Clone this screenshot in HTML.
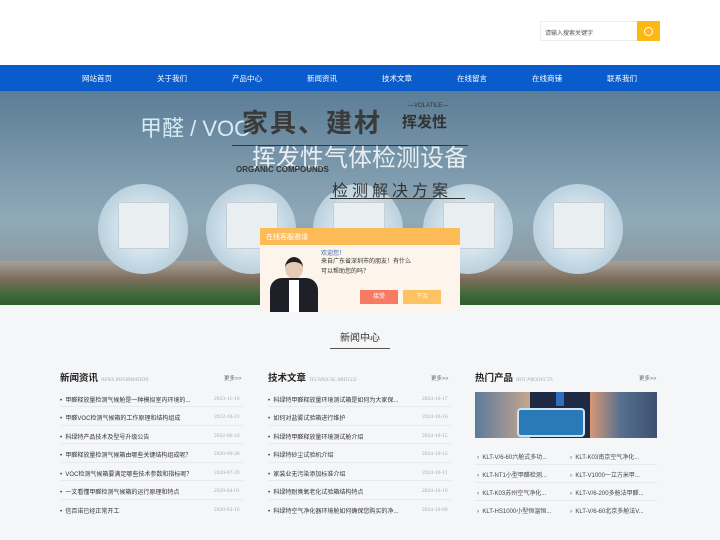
<!DOCTYPE html>
<html><head><meta charset="utf-8"><style>
*{margin:0;padding:0;box-sizing:border-box}
body{width:720px;height:540px;overflow:hidden;background:#f5f6f8;font-family:"Liberation Sans","Noto Sans CJK SC",sans-serif;position:relative}
.abs{position:absolute}
.top{left:0;top:0;width:720px;height:65px;background:#fff}
.nav{left:0;top:65px;width:720px;height:26px;background:#0a5ccc;}
.nav span{position:absolute;top:8px;font-size:7.5px;color:#fff;transform:translateX(-50%)}
.banner{left:0;top:91px;width:720px;height:214px;background:linear-gradient(180deg,#5b7d96 0%,#7b98ab 35%,#8fa9b8 60%,#8d9aa0 80%,#5d6a52 100%);overflow:hidden}
.circ{position:absolute;width:90px;height:90px;border-radius:50%;background:radial-gradient(circle,#d9e8f0 30%,#b3cbd9 80%,#a4bccb 100%);}
.circ:after{content:"";position:absolute;left:20px;top:18px;width:50px;height:45px;background:#e9eef1;border:1px solid #c5ced4}
.row{position:absolute;font-size:6px;color:#333;}
.date{position:absolute;font-size:5.5px;color:#aaa;font-family:"Liberation Serif",serif}
.line{position:absolute;height:1px;background:#e8e9ec}
.h{position:absolute;font-size:9.5px;font-weight:bold;color:#222}
.h i{font-family:"Liberation Serif",serif;font-size:5px;color:#aaa;font-weight:normal;margin-left:3px}
.more{position:absolute;font-size:5.5px;color:#666}
</style></head><body>
<div class="abs top"></div>
<div class="abs" style="left:540px;top:21px;width:98px;height:20px;border:1px solid #eee;background:#fff;font-size:6px;color:#555;padding:6px 0 0 4px">请输入搜索关键字</div>
<div class="abs" style="left:637px;top:21px;width:23px;height:20px;background:#fdb813"><div class="abs" style="left:7px;top:6px;width:9px;height:9px;border:1.2px solid #fff;border-radius:50%"></div></div>
<div class="abs nav">
<span style="left:97px">网站首页</span><span style="left:172px">关于我们</span><span style="left:247px">产品中心</span><span style="left:322px">新闻资讯</span><span style="left:397px">技术文章</span><span style="left:472px">在线留言</span><span style="left:547px">在线商铺</span><span style="left:622px">联系我们</span>
</div>
<div class="abs banner">
<div class="abs" style="left:0;top:170px;width:720px;height:45px;background:linear-gradient(180deg,#a8a19a,#7d6d5a 40%,#3e6a3a 75%,#2e5a2e)"></div>
<div class="circ" style="left:98px;top:93px"></div>
<div class="circ" style="left:206px;top:93px"></div>
<div class="circ" style="left:313px;top:93px"></div>
<div class="circ" style="left:423px;top:93px"></div>
<div class="circ" style="left:533px;top:93px"></div>
<div class="abs" style="left:140px;top:20px;font-size:22px;color:#d8ecf5">甲醛 / VOC</div>
<div class="abs" style="left:242px;top:12px;font-size:26px;font-weight:bold;color:#3a3a3a;letter-spacing:2px">家具、建材</div>
<div class="abs" style="left:402px;top:20px;font-size:15px;font-weight:bold;color:#333">挥发性</div>
<div class="abs" style="left:408px;top:12px;font-size:6px;color:#333">—VOLATILE—</div>
<div class="abs" style="left:232px;top:54px;width:236px;height:1px;background:#333"></div>
<div class="abs" style="left:252px;top:47px;font-size:24px;color:#e6eef2">挥发性气体检测设备</div>
<div class="abs" style="left:236px;top:74px;font-size:8px;color:#333;font-weight:bold">ORGANIC COMPOUNDS</div>
<div class="abs" style="left:332px;top:86px;font-size:16px;color:#333;letter-spacing:4px">检测解决方案</div>
<div class="abs" style="left:330px;top:107px;width:135px;height:1px;background:#333"></div>
</div>
<div class="abs" style="left:260px;top:228px;width:200px;height:84px;background:#fdf4ec"></div>
<div class="abs" style="left:260px;top:228px;width:200px;height:17px;background:#fdbb58;color:#fff;font-size:7px;padding:4px 0 0 6px">在线客服邀请</div>
<div class="abs" style="left:285px;top:257px;width:18px;height:22px;border-radius:50%;background:#e8c9b6;border-top:5px solid #222"></div>
<div class="abs" style="left:270px;top:278px;width:48px;height:34px;background:#1f1f28;border-radius:12px 12px 0 0"></div>
<div class="abs" style="left:289px;top:280px;width:10px;height:32px;background:#fff"></div>
<div class="abs" style="left:321px;top:248px;font-size:6px;color:#3c68b0">欢迎您！</div>
<div class="abs" style="left:321px;top:257px;width:90px;font-size:6px;line-height:10px;color:#333">来自广东省深圳市的朋友！有什么可以帮助您的吗？</div>
<div class="abs" style="left:360px;top:290px;width:38px;height:14px;background:#f77a63;color:#fff;font-size:6px;text-align:center;line-height:14px">接受</div>
<div class="abs" style="left:403px;top:290px;width:38px;height:14px;background:#fdc262;color:#fff;font-size:6px;text-align:center;line-height:14px">下次</div>
<div class="abs" style="left:0;top:329px;width:720px;text-align:center;font-size:10px;color:#333">新闻中心</div>
<div class="abs" style="left:0;top:337px;width:720px;text-align:center;font-size:5px;color:#aaa;font-family:'Liberation Serif',serif">NEWS CENTER</div>
<div class="abs" style="left:330px;top:348px;width:60px;height:1px;background:#555"></div>

<div class="h" style="left:60px;top:370px">新闻资讯<i>NEWS INFORMATION</i></div><div class="more" style="left:224px;top:374px">更多>></div>
<div class="h" style="left:268px;top:370px">技术文章<i>TECHNICAL ARTICLE</i></div><div class="more" style="left:431px;top:374px">更多>></div>
<div class="h" style="left:475px;top:370px">热门产品<i>HOT PRODUCTS</i></div><div class="more" style="left:639px;top:374px">更多>></div>

<div class="row" style="left:60px;top:395px">•&nbsp; 甲醛释放量检测气候舱是一种模拟室内环境的...</div><div class="date" style="left:214px;top:396px">2023-11-10</div>
<div class="row" style="left:60px;top:413px">•&nbsp; 甲醛VOC检测气候箱的工作原理和结构组成</div><div class="date" style="left:214px;top:414px">2022-10-21</div>
<div class="row" style="left:60px;top:432px">•&nbsp; 科绿特产品技术及型号升级公告</div><div class="date" style="left:214px;top:433px">2022-06-24</div>
<div class="row" style="left:60px;top:450px">•&nbsp; 甲醛释放量检测气候箱由哪些关键结构组成呢？</div><div class="date" style="left:214px;top:451px">2020-09-28</div>
<div class="row" style="left:60px;top:469px">•&nbsp; VOC检测气候箱要满足哪些技术参数和指标呢？</div><div class="date" style="left:214px;top:470px">2020-07-29</div>
<div class="row" style="left:60px;top:487px">•&nbsp; 一文看懂甲醛检测气候箱的运行原理和特点</div><div class="date" style="left:214px;top:488px">2020-04-01</div>
<div class="row" style="left:60px;top:506px">•&nbsp; 信百诺已经正常开工</div><div class="date" style="left:214px;top:507px">2020-03-16</div>

<div class="row" style="left:268px;top:395px">•&nbsp; 科绿特甲醛释放量环境测试箱是如何为大家保...</div><div class="date" style="left:422px;top:396px">2024-10-17</div>
<div class="row" style="left:268px;top:413px">•&nbsp; 如何对盐雾试验箱进行维护</div><div class="date" style="left:422px;top:414px">2024-10-16</div>
<div class="row" style="left:268px;top:432px">•&nbsp; 科绿特甲醛释放量环境测试舱介绍</div><div class="date" style="left:422px;top:433px">2024-10-15</div>
<div class="row" style="left:268px;top:450px">•&nbsp; 科绿特砂尘试验机介绍</div><div class="date" style="left:422px;top:451px">2024-10-12</div>
<div class="row" style="left:268px;top:469px">•&nbsp; 家装业无污染添加标准介绍</div><div class="date" style="left:422px;top:470px">2024-10-11</div>
<div class="row" style="left:268px;top:487px">•&nbsp; 科绿特耐臭氧老化试验箱结构特点</div><div class="date" style="left:422px;top:488px">2024-10-10</div>
<div class="row" style="left:268px;top:506px">•&nbsp; 科绿特空气净化器环境舱如何确保您购买的净...</div><div class="date" style="left:422px;top:507px">2024-10-09</div>

<div class="line" style="left:60px;top:406px;width:183px"></div><div class="line" style="left:60px;top:425px;width:183px"></div><div class="line" style="left:60px;top:443px;width:183px"></div><div class="line" style="left:60px;top:462px;width:183px"></div><div class="line" style="left:60px;top:480px;width:183px"></div><div class="line" style="left:60px;top:499px;width:183px"></div>
<div class="line" style="left:268px;top:406px;width:183px"></div><div class="line" style="left:268px;top:425px;width:183px"></div><div class="line" style="left:268px;top:443px;width:183px"></div><div class="line" style="left:268px;top:462px;width:183px"></div><div class="line" style="left:268px;top:480px;width:183px"></div><div class="line" style="left:268px;top:499px;width:183px"></div>

<div class="abs" style="left:475px;top:392px;width:182px;height:46px;background:linear-gradient(90deg,#5d7a9a,#e7b58a 40%,#f0a070 60%,#56708f 80%,#3d5070)"></div>
<div class="abs" style="left:530px;top:392px;width:60px;height:46px;background:#1e2a44"></div>
<div class="abs" style="left:517px;top:408px;width:68px;height:29px;background:#2b7ab8;border:2px solid #cfe3f2;border-radius:4px"></div>
<div class="abs" style="left:556px;top:392px;width:8px;height:14px;background:#2f6fc0"></div>

<div class="row" style="left:477px;top:452px;color:#444">›&nbsp; KLT-V/6-60六舱式多功...</div><div class="row" style="left:570px;top:452px;color:#444">›&nbsp; KLT-K03南京空气净化...</div>
<div class="row" style="left:477px;top:470px;color:#444">›&nbsp; KLT-NT1小型甲醛检测...</div><div class="row" style="left:570px;top:470px;color:#444">›&nbsp; KLT-V1000一立方米甲...</div>
<div class="row" style="left:477px;top:488px;color:#444">›&nbsp; KLT-K03苏州空气净化...</div><div class="row" style="left:570px;top:488px;color:#444">›&nbsp; KLT-V/6-200多舱法甲醛...</div>
<div class="row" style="left:477px;top:506px;color:#444">›&nbsp; KLT-HS1000小型恒温恒...</div><div class="row" style="left:570px;top:506px;color:#444">›&nbsp; KLT-V/6-60北京多舱法V...</div>
<div class="line" style="left:475px;top:464px;width:182px"></div><div class="line" style="left:475px;top:482px;width:182px"></div><div class="line" style="left:475px;top:500px;width:182px"></div>
</body></html>
